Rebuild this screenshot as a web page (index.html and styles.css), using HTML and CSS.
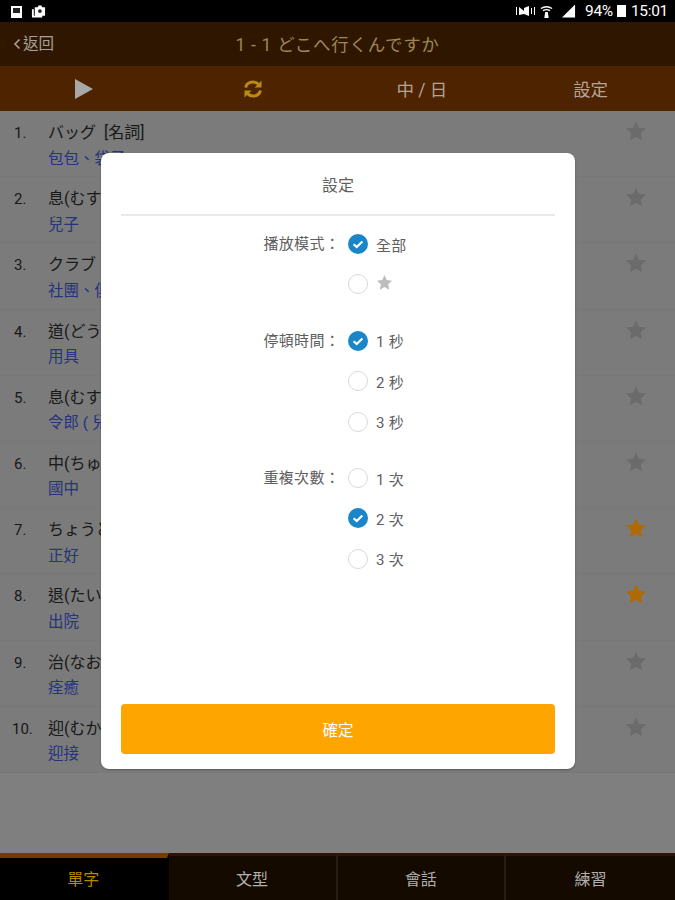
FILE: index.html
```html
<!DOCTYPE html>
<html lang="zh-Hant">
<head>
<meta charset="utf-8">
<title>設定</title>
<link rel="stylesheet" href="styles.css">
</head>
<body>
<svg class="defs" width="0" height="0"><defs>
<symbol id="star" viewBox="0 0 24 24"><path d="M12 1.5l3.2 7 7.6.9-5.6 5.2 1.5 7.5L12 18.4l-6.7 3.7 1.5-7.5L1.2 9.4l7.6-.9z"/></symbol>
<symbol id="check" viewBox="0 0 20 20"><circle cx="10" cy="10" r="10" fill="#1a86c8"/><path d="M5.6 10.2l3.1 2.9 5.7-5.6" fill="none" stroke="#fff" stroke-width="2.2"/></symbol>
</defs></svg>
<div class="app">
  <div class="status">
    <div class="status-left">
      <svg width="13" height="13" viewBox="0 0 13 13"><path fill="#fff" d="M1 1h11v12H1z"/><path fill="#222" d="M3 3h7v5H3z"/></svg>
      <svg width="15" height="14" viewBox="0 0 16 14"><path fill="#fff" d="M1 5h2v7h9v2H2a1 1 0 0 1-1-1zM4 3h3l1-2h3l1 2h3v9H4z"/><circle cx="9.500" cy="7" r="2" fill="#222"/></svg>
    </div>
    <div class="status-right">
      <svg class="mute" width="20" height="14" viewBox="0 0 20 14"><path fill="#fff" d="M0 3h1v8H0zM3 3l5 4V4l5-2v10l-5-2-5 1zM15 4h1v6h-1zM18 3h1v8h-1z"/></svg>
      <svg class="wifi" width="13" height="15" viewBox="0 0 15 15"><path fill="none" stroke="#fff" stroke-width="1.500" d="M1 4q6.500-4 13 0M3.500 6.500q4-2.500 8 0"/><path fill="#fff" d="M6 8h3l1 7H5z"/></svg>
      <svg class="sig" width="14" height="14" viewBox="0 0 15 14"><path fill="#fff" d="M14 0v14H0z"/></svg>
      <span class="pct">94%</span>
      <span class="batt"></span>
      <span class="time">15:01</span>
    </div>
  </div>
  <header class="title-bar">
    <span class="back lift"><svg width="8" height="12" viewBox="0 0 8 12"><path d="M6.500 1.500L2 6l4.500 4.500" fill="none" stroke="currentColor" stroke-width="1.600"/></svg>返回</span>
    <h1 class="title lift">1 - 1 どこへ行くんですか</h1>
  </header>
  <nav class="toolbar">
    <div class="tool"><svg class="lift" width="18" height="20" viewBox="0 0 18 20"><path fill="#a8a8a8" d="M0 0l18 10L0 20z"/></svg></div>
    <div class="tool"><svg class="lift" width="20" height="20" viewBox="0 0 20 20"><path fill="none" stroke="#bb8a12" stroke-width="3" d="M2.500 8.500C3.500 5 6.500 3 10 3c2.500 0 4.500 1.200 6 3M17.500 11.500C16.500 15 13.500 17 10 17c-2.500 0-4.500-1.200-6-3"/><path fill="#bb8a12" d="M18.500 1.500v7h-7zM1.500 18.500v-7h7z"/></svg></div>
    <div class="tool"><span class="lift">中 / 日</span></div>
    <div class="tool"><span class="lift">設定</span></div>
  </nav>
  <main class="list">
    <div class="row"><span class="num">1.</span><div class="words"><div class="jp">バッグ &nbsp;[名詞]</div><div class="zh">包包、袋子</div></div><svg class="star"><use href="#star"/></svg></div>
    <div class="row"><span class="num">2.</span><div class="words"><div class="jp">息(むす)こ</div><div class="zh">兒子</div></div><svg class="star"><use href="#star"/></svg></div>
    <div class="row"><span class="num">3.</span><div class="words"><div class="jp">クラブ</div><div class="zh">社團、俱樂部</div></div><svg class="star"><use href="#star"/></svg></div>
    <div class="row"><span class="num">4.</span><div class="words"><div class="jp">道(どう)ぐ</div><div class="zh">用具</div></div><svg class="star"><use href="#star"/></svg></div>
    <div class="row"><span class="num">5.</span><div class="words"><div class="jp">息(むす)こさん</div><div class="zh">令郎 ( 兒子 )</div></div><svg class="star"><use href="#star"/></svg></div>
    <div class="row"><span class="num">6.</span><div class="words"><div class="jp">中(ちゅう)がく</div><div class="zh">國中</div></div><svg class="star"><use href="#star"/></svg></div>
    <div class="row"><span class="num">7.</span><div class="words"><div class="jp">ちょうど</div><div class="zh">正好</div></div><svg class="star on lift"><use href="#star"/></svg></div>
    <div class="row"><span class="num">8.</span><div class="words"><div class="jp">退(たい)いん</div><div class="zh">出院</div></div><svg class="star on lift"><use href="#star"/></svg></div>
    <div class="row"><span class="num">9.</span><div class="words"><div class="jp">治(なお)る</div><div class="zh">痊癒</div></div><svg class="star"><use href="#star"/></svg></div>
    <div class="row"><span class="num">10.</span><div class="words"><div class="jp">迎(むか)える</div><div class="zh">迎接</div></div><svg class="star"><use href="#star"/></svg></div>
  </main>
  <footer class="tabs">
    <div class="tab active"><span class="lift">單字</span></div>
    <div class="tab"><span class="lift">文型</span></div>
    <div class="tab"><span class="lift">會話</span></div>
    <div class="tab"><span class="lift">練習</span></div>
  </footer>
  <div class="scrim"></div>
  <section class="dialog">
    <div class="dialog-title">設定</div>
    <div class="form">
      <div class="group">
        <div class="label">播放模式：</div>
        <div class="opts">
          <div class="opt"><svg class="radio"><use href="#check"/></svg>全部</div>
          <div class="opt"><span class="radio empty"></span><svg class="mini-star"><use href="#star"/></svg></div>
        </div>
      </div>
      <div class="group">
        <div class="label">停頓時間：</div>
        <div class="opts">
          <div class="opt"><svg class="radio"><use href="#check"/></svg>1 秒</div>
          <div class="opt"><span class="radio empty"></span>2 秒</div>
          <div class="opt"><span class="radio empty"></span>3 秒</div>
        </div>
      </div>
      <div class="group">
        <div class="label">重複次數：</div>
        <div class="opts">
          <div class="opt"><span class="radio empty"></span>1 次</div>
          <div class="opt"><svg class="radio"><use href="#check"/></svg>2 次</div>
          <div class="opt"><span class="radio empty"></span>3 次</div>
        </div>
      </div>
    </div>
    <button class="confirm">確定</button>
  </section>
</div>
</body>
</html>
```
FILE: styles.css
```css
* { box-sizing: border-box; }
html, body { margin: 0; padding: 0; }
body { font-family: Roboto, "Noto Sans CJK TC", "Noto Sans", sans-serif; background: #fff; }
.defs { position: absolute; }
.app { position: relative; width: 675px; height: 900px; overflow: hidden; display: flex; flex-direction: column; background: #fff; }
.lift { position: relative; z-index: 2; }

.status { position: relative; z-index: 3; height: 22px; flex: none; background: #000; color: #fff; display: flex; justify-content: space-between; align-items: center; padding: 0 7px 0 10px; font-size: 15.500px; }
.status-left, .status-right { display: flex; align-items: center; }
.status-left { gap: 8px; }
.status-right .mute { margin-right: 4px; }
.status-right .wifi { margin-right: 9px; }
.status-right .sig { margin-right: 9px; }
.batt { width: 9px; height: 12px; background: #fff; margin: 0 5px 0 4px; }
.pct, .time { letter-spacing: -0.3px; }

.title-bar { height: 44px; background: #5e2c00; display: flex; align-items: center; justify-content: center; position: relative; flex: none; }
.back { position: absolute; left: 13px; top: 12px; display: flex; align-items: center; gap: 2px; font-size: 15.500px; line-height: 20px; color: #a6a09a; }
.title { margin: 0 0 1px; font-weight: 400; font-size: 17.500px; color: #9c8758; letter-spacing: 0.7px; }

.toolbar { height: 45px; flex: none; background: #9a4600; display: grid; grid-template-columns: repeat(4, 1fr); }
.tool { display: flex; align-items: center; justify-content: center; color: #b5a298; font-size: 17.500px; }

.list { flex: 1; background: #fff; }
.row { height: 66.200px; background: #f6f6f6; border-bottom: 1px solid #eee; display: flex; padding: 10px 28px 0 14px; }
.num { width: 34px; font-size: 15px; line-height: 24px; color: #333; }
.row:last-child .num { margin-left: -2px; width: 36px; }
.words { flex: 1; }
.jp { font-size: 16px; line-height: 24px; color: #333; }
.zh { font-size: 15.500px; line-height: 24px; margin-top: 1.500px; color: #4a68ff; }
.star { width: 22px; height: 22px; fill: #d6d6d6; margin-top: -1px; }
.star.on { fill: #b06a00; }

.tabs { height: 47px; flex: none; display: grid; grid-template-columns: repeat(4, 1fr); background: #2a1400; }
.tab { display: flex; align-items: center; justify-content: center; color: #b0b0b0; font-size: 16px; border-top: 3px solid #5e2600; border-right: 2px solid #5a3a1c; }
.tab:last-child { border-right: 0; }
.tab.active { background: #000; color: #b88600; border-top: 5px solid #e87a00; border-right-color: #000; padding-bottom: 2px; }
.tab:not(.active) { padding-bottom: 1px; }

.scrim { position: absolute; inset: 22px 0 0; background: rgba(0, 0, 0, .5); z-index: 1; }

.dialog { position: absolute; z-index: 2; left: 101px; top: 153px; width: 474px; height: 616px; background: #fff; border-radius: 8px; padding: 0 20px 15px; display: flex; flex-direction: column; color: #5e5e5e; box-shadow: 0 1px 2px rgba(0, 0, 0, .3); }
.dialog-title { height: 63px; flex: none; display: flex; align-items: center; justify-content: center; font-size: 16px; border-bottom: 2px solid #e9e9e9; }
.form { flex: 1; padding-top: 8px; display: flex; flex-direction: column; gap: 16.250px; }
.group { display: flex; font-size: 15px; letter-spacing: 0.3px; }
.label { width: 219px; text-align: right; line-height: 40px; flex: none; }
.opts { padding-left: 8px; }
.opt { height: 40.300px; display: flex; align-items: center; gap: 8px; }
.radio { width: 20px; height: 20px; flex: none; display: block; }
.radio.empty { border: 1px solid #d9d9d9; border-radius: 50%; }
.mini-star { width: 17px; height: 17px; fill: #bdbdbd; margin: -3px 0 0 0; }
.confirm { height: 50px; flex: none; border: 0; background: #ffa500; border-radius: 4px; color: #fff; font: inherit; font-size: 15.500px; }
```
